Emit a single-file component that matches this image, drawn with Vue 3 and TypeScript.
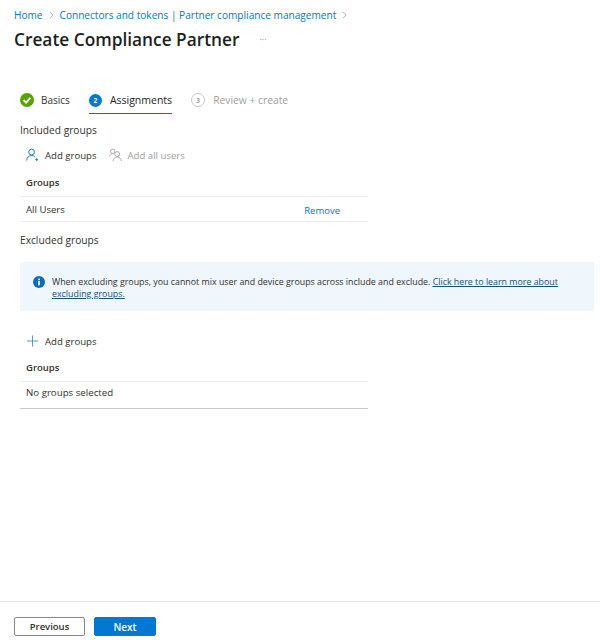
<script setup lang="ts">
const steps = [
  { label: 'Basics', state: 'done' },
  { label: 'Assignments', state: 'active', n: 2 },
  { label: 'Review + create', state: 'todo', n: 3 },
]
</script>

<template>
  <div class="page">
    <main class="main">
      <nav class="crumbs">
        <a>Home</a>
        <svg class="chev" viewBox="0 0 6 10"><path d="M1 1l4 4-4 4" /></svg>
        <a>Connectors and tokens | Partner compliance management</a>
        <svg class="chev" viewBox="0 0 6 10"><path d="M1 1l4 4-4 4" /></svg>
      </nav>
      <div class="title-row">
        <h1>Create Compliance Partner</h1>
        <span class="more">···</span>
      </div>

      <div class="steps">
        <div v-for="s in steps" :key="s.label" class="step" :class="s.state">
          <svg v-if="s.state === 'done'" class="badge" viewBox="0 0 14 14">
            <circle cx="7" cy="7" r="7" fill="#57a300" />
            <path d="M3.6 7.2l2.4 2.4 4.4-4.8" fill="none" stroke="#fff" stroke-width="1.8" />
          </svg>
          <span v-else class="num">{{ s.n }}</span>
          <span>{{ s.label }}</span>
        </div>
      </div>

      <section class="included">
        <h2>Included groups</h2>
        <div class="toolbar">
          <button class="tool">
            <svg class="ico" viewBox="0 0 14 14" fill="none" stroke="#0078d4">
              <circle cx="6" cy="3.8" r="3.1" />
              <path d="M0.8 13c0-3.2 2-5.4 5.2-5.4 1.4 0 2.6.4 3.4 1.2" />
              <path d="M11.5 10.5v3M10 12h3" />
            </svg>
            Add groups
          </button>
          <button class="tool off">
            <svg class="ico" viewBox="0 0 14 14" fill="none" stroke="#a6a6a6">
              <circle cx="4" cy="3" r="2.3" />
              <path d="M0.6 8.6c0-1.8 1.4-3 3.4-3" />
              <circle cx="8.8" cy="6" r="2.6" />
              <path d="M4.4 13.6c0-2.6 1.8-4.4 4.4-4.4s4.4 1.8 4.4 4.4" />
            </svg>
            Add all users
          </button>
        </div>
        <div class="table">
          <div class="row head">Groups</div>
          <div class="row">
            <span>All Users</span>
            <a class="remove">Remove</a>
          </div>
        </div>
      </section>

      <h2 class="excluded">Excluded groups</h2>
      <div class="banner">
        <svg class="info" viewBox="0 0 12 12">
          <circle cx="6" cy="6" r="6" fill="#0f6cbd" />
          <rect x="5.2" y="5" width="1.6" height="4.4" fill="#fff" />
          <rect x="5.2" y="2.6" width="1.6" height="1.6" fill="#fff" />
        </svg>
        <p>When excluding groups, you cannot mix user and device groups across include and exclude. <a>Click here to learn more about excluding groups.</a></p>
      </div>

      <section class="second">
        <div class="toolbar">
          <button class="tool">
            <svg class="ico" viewBox="0 0 14 14" fill="none" stroke="#4a90c4">
              <path d="M7 1v12M1 7h12" />
            </svg>
            Add groups
          </button>
        </div>
        <div class="table closed">
          <div class="row head">Groups</div>
          <div class="row">No groups selected</div>
        </div>
      </section>
    </main>

    <footer class="footer">
      <button class="btn">Previous</button>
      <button class="btn primary">Next</button>
    </footer>
  </div>
</template>

<style scoped>
.page {
  width: 600px;
  height: 640px;
  display: flex;
  flex-direction: column;
  background: #fff;
  color: #323130;
  font-family: "Open Sans", "Noto Sans", sans-serif;
  font-size: 9.6px;
  overflow: hidden;
}
.main { flex: 1; padding: 7px 6px 0 20px; }
a { color: #0078d4; }
.crumbs {
  margin-left: -6px;
  height: 15px;
  display: flex;
  align-items: center;
  gap: 6px;
  font-size: 10.1px;
}
.chev { width: 5px; height: 8px; fill: none; stroke: #8a8886; stroke-width: 0.8; }
.title-row { margin: 5px 0 0 -6px; height: 24px; display: flex; align-items: center; }
h1 { margin: 0; font-size: 17.3px; font-weight: 600; color: #201f1e; }
.more { margin-left: 20px; color: #8a8886; font-size: 9px; }
.steps { margin-top: 35px; height: 28px; display: flex; gap: 19px; }
.step {
  display: flex;
  align-items: center;
  gap: 7px;
  height: 28px;
  padding-top: 1px;
  border-bottom: 1.5px solid transparent;
  box-sizing: border-box;
  font-size: 10px;
}
.step.active { border-bottom-color: #0f6cbd; color: #201f1e; font-size: 10.5px; gap: 8px; }
.step.todo { color: #a19f9d; font-size: 10.3px; gap: 8px; }
.badge { width: 14px; height: 14px; }
.num {
  width: 13px;
  height: 13px;
  border-radius: 50%;
  display: flex;
  align-items: center;
  justify-content: center;
  box-sizing: border-box;
  font-size: 6.5px;
  font-weight: 700;
  background: #0078d4;
  color: #fff;
}
.todo .num { width: 14px; height: 14px; background: #fff; color: #a19f9d; border: 1px solid #c8c6c4; }
h2 { margin: 0; font-size: 10.2px; font-weight: 400; line-height: 14px; }
.included { margin-top: 9px; }
.toolbar { display: flex; gap: 12px; height: 26px; padding-left: 6px; margin-top: 5px; align-items: center; }
.tool {
  display: flex;
  align-items: center;
  gap: 6px;
  padding: 0;
  border: 0;
  background: none;
  font: inherit;
  color: #323130;
}
.tool.off { color: #a19f9d; }
.ico { width: 13px; height: 14px; }
.table { width: 348px; margin-top: 1px; }
.row {
  display: flex;
  justify-content: space-between;
  align-items: center;
  height: 25px;
  padding: 0 28px 0 6px;
  border-bottom: 1px solid #edebe9;
  box-sizing: border-box;
}
.row.head { font-weight: 600; height: 28px; font-size: 9.5px; }
.remove { font-size: 9.5px; padding-top: 2px; }
.excluded { margin-top: 11px; }
.banner {
  margin-top: 15px;
  height: 49px;
  display: flex;
  align-items: flex-start;
  gap: 7px;
  padding: 14px 30px 0 13px;
  background: #eff6fc;
  box-sizing: border-box;
}
.info { width: 12px; height: 12px; flex: none; }
.banner p { margin: 0; line-height: 12px; font-size: 8.85px; padding-top: 0; }
.banner a { color: #1b4f7f; text-decoration: underline; }
.second { margin-top: 17px; }
.second .toolbar { margin-top: 0; }
.closed { border-bottom: 1px solid #c8c6c4; }
.closed .row { height: 26px; font-size: 9.7px; }
.closed .row.head { height: 27px; font-size: 9.5px; padding-bottom: 2px; }
.closed .row:last-child { border-bottom: 0; padding-bottom: 5px; }
.footer {
  height: 39px;
  flex: none;
  display: flex;
  gap: 9px;
  padding: 15px 14px 0;
  border-top: 1px solid #e6e6e6;
  box-sizing: border-box;
}
.btn {
  width: 71px;
  height: 19px;
  padding: 0;
  border: 1px solid #8a8886;
  border-radius: 2px;
  background: #fff;
  font: inherit;
  font-size: 9.5px;
  font-weight: 600;
  color: #323130;
}
.btn.primary { width: 62px; background: #0078d4; border-color: #0078d4; color: #fff; font-size: 10px; }
</style>
